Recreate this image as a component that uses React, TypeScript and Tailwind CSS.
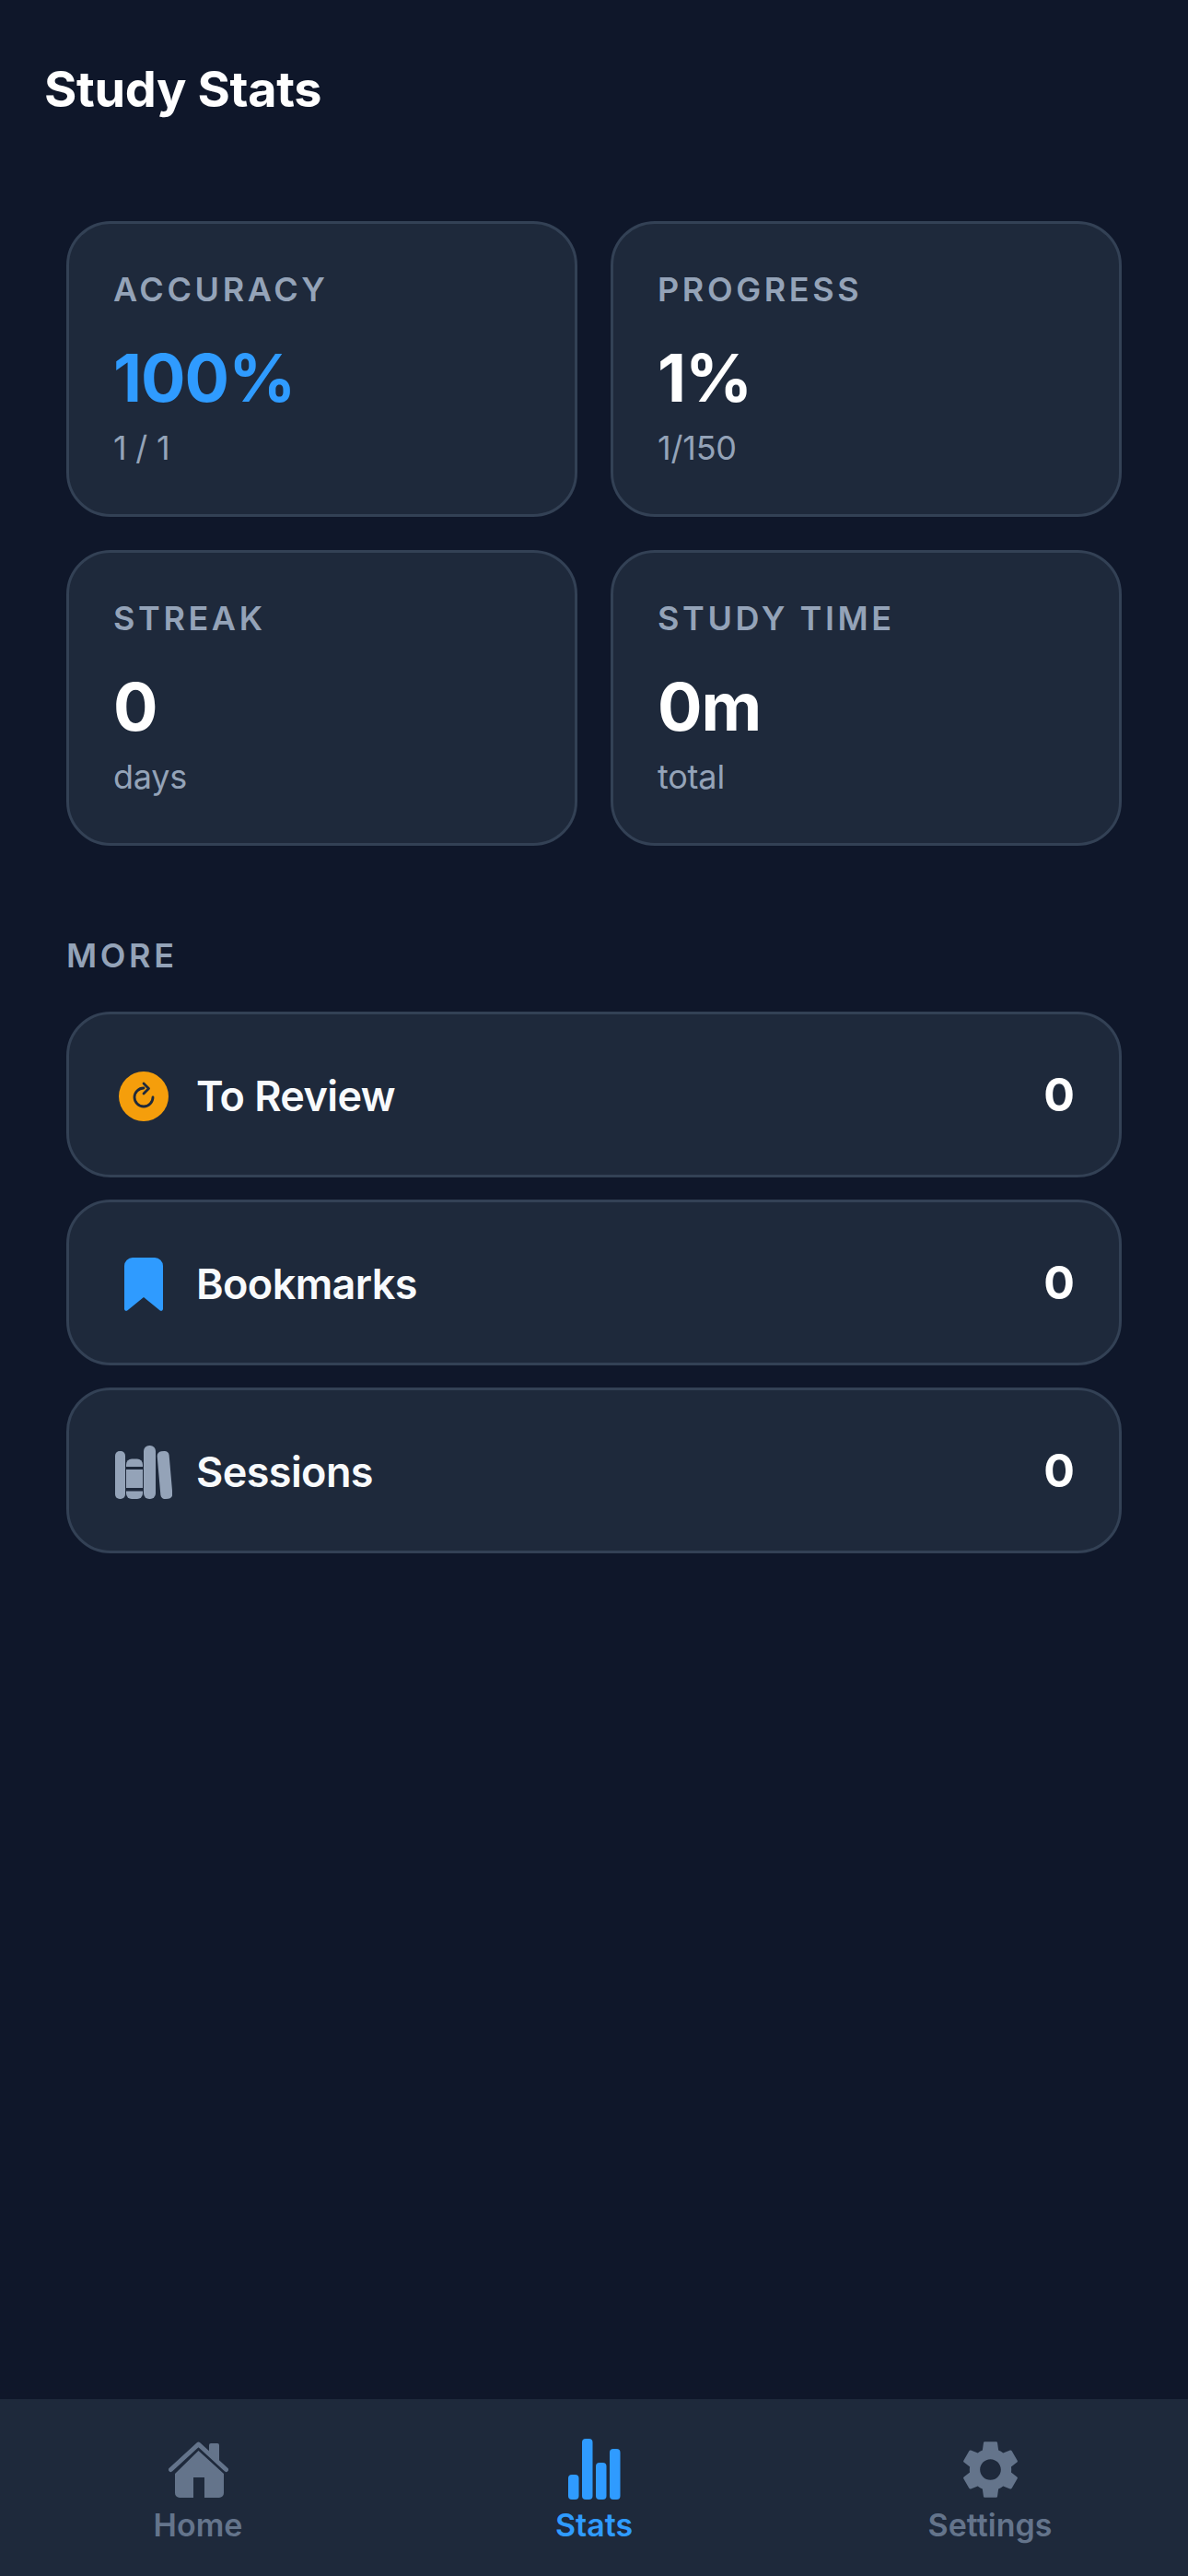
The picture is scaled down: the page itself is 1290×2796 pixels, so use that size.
import React from 'react';

const STATS = [
  { label: 'ACCURACY', value: '100%', sub: '1 / 1', accent: true },
  { label: 'PROGRESS', value: '1%', sub: '1/150', accent: false },
  { label: 'STREAK', value: '0', sub: 'days', accent: false },
  { label: 'STUDY TIME', value: '0m', sub: 'total', accent: false },
];

const ReviewIcon = () => (
  <svg width="54" height="54" viewBox="0 0 54 54">
    <circle cx="27" cy="27" r="27" fill="#f59e0b" />
    <path
      d="M37 28A10 10 0 1 1 27 18M27 13l5.5 5.5L27 24"
      fill="none"
      stroke="#1e293b"
      strokeWidth="2.8"
      strokeLinecap="round"
      strokeLinejoin="round"
    />
  </svg>
);

const BookmarkIcon = () => (
  <svg width="42" height="58" viewBox="0 0 42 58">
    <path
      d="M9 0H33a9 9 0 0 1 9 9V55.5c0 2-2 3-3.5 1.8L21 43 3.5 57.3C2 58.5 0 57.5 0 55.5V9a9 9 0 0 1 9-9z"
      fill="#2f9bff"
    />
  </svg>
);

const BooksIcon = () => (
  <svg width="62" height="58" viewBox="0 0 62 58">
    <g fill="#94a3b8">
      <rect x="0" y="6" width="11" height="52" rx="5" />
      <rect x="12" y="14.5" width="18" height="43.5" rx="6" />
      <rect x="31" y="0" width="13" height="58" rx="6" />
      <rect x="47.5" y="6" width="13" height="52" rx="5" transform="rotate(-5 54 32)" />
    </g>
    <rect x="12" y="23" width="18" height="3" fill="#1e293b" />
    <rect x="12" y="46" width="18" height="3.5" fill="#1e293b" />
  </svg>
);

const HomeIcon = () => (
  <svg width="65" height="61" viewBox="0 0 65 61" fill="#64748b">
    <path d="M44 4a2 2 0 0 1 2-2h7a2 2 0 0 1 2 2V22L44 12z" />
    <path
      d="M2.5 30.5L32.5 3l30 27.5"
      fill="none"
      stroke="#64748b"
      strokeWidth="5"
      strokeLinecap="round"
      strokeLinejoin="round"
    />
    <path d="M32.5 10L60 35V56a5 5 0 0 1-5 5H39V39H27V61H12a5 5 0 0 1-5-5V35z" />
  </svg>
);

const BarsIcon = () => (
  <svg width="57" height="66" viewBox="0 0 57 66" fill="#2f9bff">
    <rect x="0" y="39" width="11.5" height="27" rx="4" />
    <rect x="15" y="0" width="11.5" height="66" rx="4" />
    <rect x="30" y="26" width="11.5" height="40" rx="4" />
    <rect x="45" y="11" width="11.5" height="55" rx="4" />
  </svg>
);

const GearIcon = () => (
  <svg width="61" height="63" viewBox="2.6 2 18.8 20" fill="#64748b">
    <path d="M19.14 12.94c.04-.3.06-.61.06-.94 0-.32-.02-.64-.07-.94l2.03-1.58c.18-.14.23-.41.12-.61l-1.92-3.32c-.12-.22-.37-.29-.59-.22l-2.39.96c-.5-.38-1.03-.7-1.62-.94l-.36-2.54c-.04-.24-.24-.41-.48-.41h-3.84c-.24 0-.43.17-.47.41l-.36 2.54c-.59.24-1.13.57-1.62.94l-2.39-.96c-.22-.08-.47 0-.59.22L2.74 8.87c-.12.21-.08.47.12.61l2.03 1.58c-.05.3-.09.63-.09.94s.02.64.07.94l-2.03 1.58c-.18.14-.23.41-.12.61l1.92 3.32c.12.22.37.29.59.22l2.39-.96c.5.38 1.03.7 1.62.94l.36 2.54c.05.24.24.41.48.41h3.84c.24 0 .44-.17.47-.41l.36-2.54c.59-.24 1.13-.56 1.62-.94l2.39.96c.22.08.47 0 .59-.22l1.92-3.32c.12-.22.07-.47-.12-.61l-2.01-1.58zM12 15.6c-1.98 0-3.6-1.62-3.6-3.6s1.62-3.6 3.6-3.6 3.6 1.62 3.6 3.6-1.62 3.6-3.6 3.6z" />
  </svg>
);

const MORE = [
  { label: 'To Review', count: 0, icon: <ReviewIcon /> },
  { label: 'Bookmarks', count: 0, icon: <BookmarkIcon /> },
  { label: 'Sessions', count: 0, icon: <BooksIcon /> },
];

const TABS = [
  { label: 'Home', icon: <HomeIcon />, active: false },
  { label: 'Stats', icon: <BarsIcon />, active: true },
  { label: 'Settings', icon: <GearIcon />, active: false },
];

const App: React.FC = () => {
  return (
    <div className="flex h-[2796px] w-[1290px] flex-col overflow-hidden bg-[#0f172a] font-['Inter',sans-serif]">
      {/* Header */}
      <header className="px-12 pt-[64px] pb-[110px]">
        <h1 className="text-[54px] leading-[66px] font-bold tracking-[-0.35px] text-white">Study Stats</h1>
      </header>

      <main className="flex-1 px-[72px]">
        {/* Stat cards */}
        <div className="grid grid-cols-2 gap-9">
          {STATS.map((stat) => (
            <div
              key={stat.label}
              className="h-[321px] rounded-[48px] border-[3px] border-[#334155] bg-[#1e293b] px-12 pt-12"
            >
              <p className="text-[36px] leading-[46px] font-semibold tracking-[3.6px] text-[#94a3b8]">
                {stat.label}
              </p>
              <p
                className={`mt-[30px] text-[72px] leading-[86px] font-bold tracking-[-1px] ${
                  stat.accent ? 'text-[#2f9bff]' : 'text-white'
                }`}
              >
                {stat.value}
              </p>
              <p className="mt-[10px] text-[36px] leading-[46px] tracking-[-0.2px] text-[#94a3b8]">{stat.sub}</p>
            </div>
          ))}
        </div>

        {/* More */}
        <h2 className="mt-[96px] text-[36px] leading-[46px] font-semibold tracking-[3.6px] text-[#94a3b8]">
          MORE
        </h2>
        <div className="mt-[38px] flex flex-col gap-6">
          {MORE.map((item) => (
            <div
              key={item.label}
              className="flex h-[180px] items-center rounded-[48px] border-[3px] border-[#334155] bg-[#1e293b] px-12"
            >
              <div className="mt-[4px] flex w-[66px] items-center justify-center">{item.icon}</div>
              <span className="mt-[4px] ml-[24px] flex-1 text-[45px] font-semibold tracking-[-0.6px] text-[#f8fafc]">
                {item.label}
              </span>
              <span className="text-[50px] font-bold text-white">{item.count}</span>
            </div>
          ))}
        </div>
      </main>

      {/* Tab bar */}
      <nav className="grid h-[192px] grid-cols-3 bg-[#1e293b]">
        {TABS.map((tab) => (
          <div key={tab.label} className="flex flex-col items-center pt-[43px]">
            <div className="flex h-[66px] items-center justify-center">{tab.icon}</div>
            <span
              className={`mt-[6px] text-[34px] leading-[44px] font-semibold ${
                tab.active ? 'text-[#2f9bff]' : 'text-[#64748b]'
              }`}
            >
              {tab.label}
            </span>
          </div>
        ))}
      </nav>
    </div>
  );
};

export default App;
